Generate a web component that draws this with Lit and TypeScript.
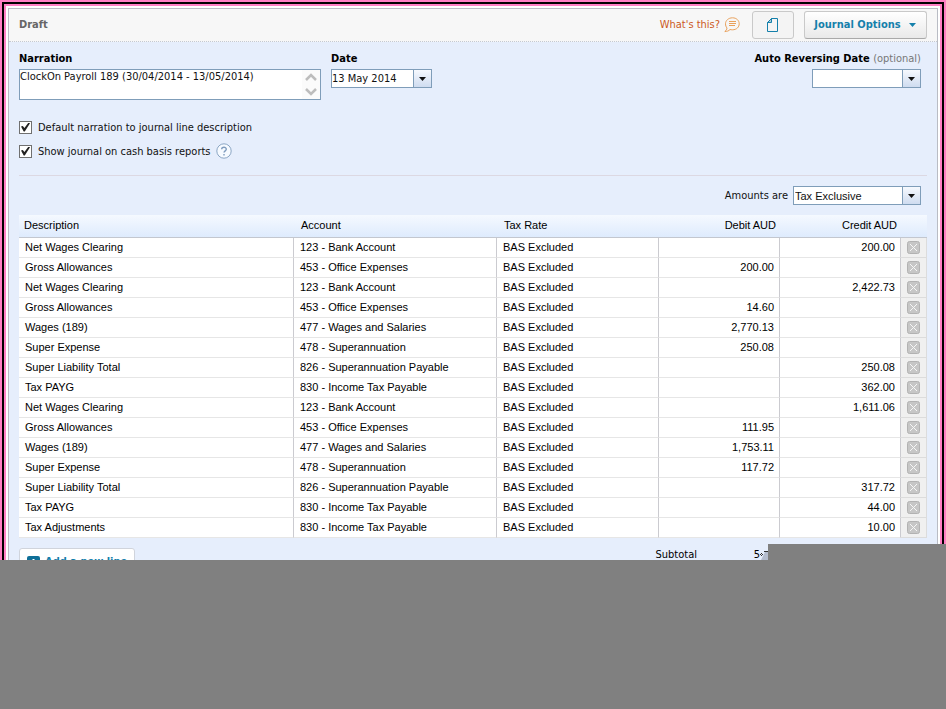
import { LitElement, html, css, svg } from "lit";
import { customElement } from "lit/decorators.js";

interface Line {
  description: string;
  account: string;
  debit?: string;
  credit?: string;
}

const BANK = "123 - Bank Account";
const OFFICE = "453 - Office Expenses";
const WAGES = "477 - Wages and Salaries";
const SUPER = "478 - Superannuation";
const SUPER_PAYABLE = "826 - Superannuation Payable";
const TAX_PAYABLE = "830 - Income Tax Payable";

const LINES: Line[] = [
  { description: "Net Wages Clearing", account: BANK, credit: "200.00" },
  { description: "Gross Allowances", account: OFFICE, debit: "200.00" },
  { description: "Net Wages Clearing", account: BANK, credit: "2,422.73" },
  { description: "Gross Allowances", account: OFFICE, debit: "14.60" },
  { description: "Wages (189)", account: WAGES, debit: "2,770.13" },
  { description: "Super Expense", account: SUPER, debit: "250.08" },
  { description: "Super Liability Total", account: SUPER_PAYABLE, credit: "250.08" },
  { description: "Tax PAYG", account: TAX_PAYABLE, credit: "362.00" },
  { description: "Net Wages Clearing", account: BANK, credit: "1,611.06" },
  { description: "Gross Allowances", account: OFFICE, debit: "111.95" },
  { description: "Wages (189)", account: WAGES, debit: "1,753.11" },
  { description: "Super Expense", account: SUPER, debit: "117.72" },
  { description: "Super Liability Total", account: SUPER_PAYABLE, credit: "317.72" },
  { description: "Tax PAYG", account: TAX_PAYABLE, credit: "44.00" },
  { description: "Tax Adjustments", account: TAX_PAYABLE, credit: "10.00" },
];

const caret = html`<svg class="caret" width="8" height="4" viewBox="0 0 8 4" aria-hidden="true">
  <path d="M0 0h7L3.500 4z" fill="currentColor" />
</svg>`;

const deleteIcon = svg`<svg width="13" height="13" viewBox="0 0 13 13" aria-hidden="true">
  <rect x="0.500" y="0.500" width="12" height="12" rx="2" fill="#c6c6c6" stroke="#b2b2b2" />
  <path d="M3 3l7 7M10 3l-7 7" stroke="#f6f6f6" stroke-width="1" />
</svg>`;

@customElement("app-root")
export class AppRoot extends LitElement {
  static styles = css`
    :host {
      display: flex;
      flex-direction: column;
      min-height: 100vh;
      font: 11px/14px "DejaVu Sans Condensed", "Noto Sans", sans-serif;
      color: #111;
      background: #808080;
    }
    * {
      box-sizing: border-box;
    }
    button,
    input,
    select,
    textarea {
      font: inherit;
      color: inherit;
      margin: 0;
      padding: 0;
      border-radius: 0;
    }
    .frame {
      border: 2px solid #ff7fc4;
      border-bottom: 0;
    }
    .frame-line {
      border: 2px solid #000;
      border-bottom: 0;
    }
    .frame-inner {
      border: 2px solid #ff7fc4;
      border-bottom: 0;
      background: #fff;
      padding: 2px 2px 0;
    }
    .panel {
      border: 1px solid #b9bcc4;
      border-bottom: 0;
      background: #e6eefc;
    }
    .bar {
      display: flex;
      align-items: center;
      height: 33px;
      padding: 0 10px;
      background: #f7f7f7;
      border-bottom: 1px dotted #c4c9d2;
    }
    .title {
      flex: 1;
      margin: 0;
      font-size: 11px;
      font-weight: bold;
      color: #666;
    }
    .help-link {
      display: flex;
      align-items: center;
      gap: 4px;
      margin-right: 12px;
      color: #cc5a1e;
      text-decoration: none;
    }
    .tool {
      display: flex;
      align-items: center;
      justify-content: center;
      height: 28px;
      border: 1px solid #c9c9c9;
      border-radius: 3px;
      background: linear-gradient(#fff, #e9e9e9);
      color: #1580ab;
      font-weight: bold;
    }
    .tool-page {
      width: 42px;
      margin-right: 10px;
      background: #f4f4f4;
    }
    .tool-options {
      width: 123px;
      gap: 8px;
      border-bottom-color: #a9a9a9;
    }
    .content {
      padding: 10px 10px 0;
    }
    .fields {
      display: flex;
      gap: 10px;
      height: 63px;
    }
    .field {
      display: flex;
      flex-direction: column;
      align-items: flex-start;
      gap: 3px;
    }
    .field-right {
      margin-left: auto;
      margin-right: 6px;
      align-items: flex-end;
    }
    .label {
      font-weight: bold;
      color: #000;
    }
    .optional {
      font-weight: normal;
      color: #777;
    }
    .narration {
      display: flex;
      width: 302px;
      height: 31px;
      border: 1px solid #7f9db9;
      background: #fff;
    }
    .narration-text {
      flex: 1;
      border: 0;
      outline: 0;
      resize: none;
      overflow: hidden;
      background: none;
    }
    .scroll {
      display: flex;
      flex-direction: column;
      align-items: center;
      justify-content: space-around;
      width: 18px;
      background: #fbfbfb;
    }
    .combo {
      display: flex;
      height: 19px;
      border: 1px solid #7f9db9;
      background: #fff;
    }
    .combo-date {
      width: 101px;
    }
    .combo-reverse {
      width: 109px;
    }
    .combo-amounts {
      width: 128px;
      position: relative;
    }
    .combo-input {
      flex: 1;
      min-width: 0;
      border: 0;
      outline: 0;
      background: none;
      appearance: none;
    }
    .combo-button {
      display: flex;
      align-items: center;
      justify-content: center;
      width: 18px;
      border: 0;
      border-left: 1px solid #7f9db9;
      background: linear-gradient(#f6f9fe, #cfdcf0);
      color: #111;
    }
    .arial {
      padding: 0 1px;
      font-family: "Liberation Sans", Arial, sans-serif;
    }
    .checks {
      display: flex;
      flex-direction: column;
      padding-bottom: 12px;
      border-bottom: 1px solid #dcd8e2;
    }
    .check {
      display: flex;
      align-items: center;
      gap: 6px;
      height: 24px;
    }
    .check label {
      margin-top: 2px;
    }
    .tick {
      appearance: none;
      width: 13px;
      height: 13px;
      border: 1px solid #707070;
      background: #fff;
      display: grid;
      place-items: center;
    }
    .tick:checked::before {
      content: "";
      width: 9px;
      height: 9px;
      background: #222;
      clip-path: polygon(0 45%, 20% 38%, 38% 62%, 84% 0, 100% 8%, 42% 100%, 30% 100%);
    }
    .question {
      display: flex;
      border: 0;
      background: none;
    }
    .amounts {
      display: flex;
      justify-content: flex-end;
      align-items: center;
      gap: 5px;
      padding: 10px 6px 10px 0;
    }
    .lines {
      width: 100%;
      table-layout: fixed;
      border-collapse: separate;
      border-spacing: 0;
      font: 11px/14px "Liberation Sans", Arial, sans-serif;
      color: #000;
    }
    .lines th {
      height: 23px;
      padding: 0 4px 2px 7px;
      font-weight: normal;
      text-align: left;
      background: linear-gradient(#f5f9ff, #deebfd);
      border-bottom: 1px solid #c3c7cf;
    }
    .lines th:first-child {
      padding-left: 5px;
    }
    .lines td {
      height: 20px;
      padding: 0 5px 1px 6px;
      background: #fff;
      border-right: 1px solid #cbcbd0;
      border-bottom: 1px solid #e6e6e6;
      white-space: nowrap;
    }
    .lines .num {
      text-align: right;
    }
    .lines .remove-cell {
      padding: 0;
      background: #f0f0f0;
      border-color: #dcdcdc;
    }
    .col-account {
      width: 203px;
    }
    .col-rate {
      width: 162px;
    }
    .col-amount {
      width: 121px;
    }
    .col-remove {
      width: 26px;
    }
    .remove {
      display: flex;
      margin: 0 auto;
      border: 0;
      background: none;
    }
    .summary {
      display: flex;
      align-items: flex-start;
      height: 22px;
      overflow: hidden;
      padding-top: 10px;
    }
    .add {
      display: flex;
      align-items: center;
      gap: 5px;
      width: 116px;
      height: 28px;
      padding-left: 7px;
      border: 1px solid #d0d4dc;
      border-radius: 3px;
      background: #fff;
      color: #1580ab;
      font-weight: bold;
      white-space: nowrap;
    }
    .subtotal {
      flex: 1;
      display: flex;
      justify-content: flex-end;
      padding: 2px 159px 0 0;
      line-height: 10px;
      color: #000;
    }
    .subtotal-value {
      display: flex;
      justify-content: flex-end;
      width: 71px;
    }
    .cover {
      flex: 1;
      position: relative;
      background: #808080;
    }
    .cover-step {
      position: absolute;
      right: 0;
      bottom: 100%;
      width: 178px;
      height: 16px;
      background: #808080;
    }
  `;

  render() {
    return html`
      <div class="frame"><div class="frame-line"><div class="frame-inner">
        <main class="panel">
          <header class="bar">
            <h1 class="title">Draft</h1>
            <a class="help-link" href="#help">What's this?
              <svg width="16" height="16" viewBox="0 0 16 16" fill="none" stroke="#e9a15c" aria-hidden="true">
                <path d="M8.500 0.800C12.500 0.800 15.200 3.500 15.200 6.800S12.500 12.800 8.500 12.800C7.500 12.800 6.800 12.700 6 12.500C4.700 14 3 14.500 0.800 14.500C2.200 13.500 2.800 12.500 3 11C2 9.800 1.500 8.500 1.500 6.800C1.500 3.500 4.500 0.800 8.500 0.800z" />
                <path d="M5 4.500h7M5 6.500h7M5 8.500h6" />
              </svg>
            </a>
            <button class="tool tool-page" aria-label="Files">
              <svg width="12" height="14" viewBox="0 0 12 14" fill="none" stroke="currentColor" aria-hidden="true">
                <path d="M4.500 0.500h6v13h-10v-9z" />
                <path d="M4.500 0.500v4h-4z" fill="currentColor" fill-opacity="0.350" />
              </svg>
            </button>
            <button class="tool tool-options">Journal Options ${caret}</button>
          </header>

          <section class="content">
            <div class="fields">
              <div class="field">
                <label class="label" for="narration">Narration</label>
                <div class="narration">
                  <textarea id="narration" class="narration-text" .value=${"ClockOn Payroll 189 (30/04/2014 - 13/05/2014)"}></textarea>
                  <div class="scroll">
                    <svg width="12" height="8" viewBox="0 0 12 8" fill="none" stroke="#bdbdbd" stroke-width="2.500"><path d="M1 7l5-5 5 5" /></svg>
                    <svg width="12" height="8" viewBox="0 0 12 8" fill="none" stroke="#bdbdbd" stroke-width="2.500"><path d="M1 1l5 5 5-5" /></svg>
                  </div>
                </div>
              </div>
              <div class="field">
                <label class="label" for="date">Date</label>
                <div class="combo combo-date">
                  <input id="date" class="combo-input" value="13 May 2014" />
                  <button class="combo-button" aria-label="Choose date">${caret}</button>
                </div>
              </div>
              <div class="field field-right">
                <label class="label" for="reverse">Auto Reversing Date <span class="optional">(optional)</span></label>
                <div class="combo combo-reverse">
                  <input id="reverse" class="combo-input" />
                  <button class="combo-button" aria-label="Choose reversing date">${caret}</button>
                </div>
              </div>
            </div>

            <div class="checks">
              <div class="check">
                <input id="default" class="tick" type="checkbox" checked />
                <label for="default">Default narration to journal line description</label>
              </div>
              <div class="check">
                <input id="cash" class="tick" type="checkbox" checked />
                <label for="cash">Show journal on cash basis reports</label>
                <button class="question" aria-label="Help">
                  <svg width="16" height="16" viewBox="0 0 16 16" fill="none" aria-hidden="true">
                    <circle cx="8" cy="8" r="7.200" fill="#f6faff" stroke="#8ba6c4" />
                    <path d="M5.700 6.300C5.700 3.500 10.300 3.500 10.300 6.200C10.300 7.800 8 7.900 8 9.600M8 11v1.500" stroke="#7f9cbe" stroke-width="1.400" />
                  </svg>
                </button>
              </div>
            </div>

            <div class="amounts">
              <label for="amounts">Amounts are</label>
              <div class="combo combo-amounts">
                <select id="amounts" class="combo-input arial">
                  <option>Tax Exclusive</option>
                  <option>Tax Inclusive</option>
                  <option>No Tax</option>
                </select>
                <span class="combo-button">${caret}</span>
              </div>
            </div>

            <table class="lines">
              <colgroup>
                <col />
                <col class="col-account" />
                <col class="col-rate" />
                <col class="col-amount" />
                <col class="col-amount" />
                <col class="col-remove" />
              </colgroup>
              <thead>
                <tr>
                  <th>Description</th>
                  <th>Account</th>
                  <th>Tax Rate</th>
                  <th class="num">Debit AUD</th>
                  <th class="num">Credit AUD</th>
                  <th></th>
                </tr>
              </thead>
              <tbody>
                ${LINES.map(
                  (line) => html`<tr>
                    <td>${line.description}</td>
                    <td>${line.account}</td>
                    <td>BAS Excluded</td>
                    <td class="num">${line.debit}</td>
                    <td class="num">${line.credit}</td>
                    <td class="remove-cell"><button class="remove" aria-label="Remove line">${deleteIcon}</button></td>
                  </tr>`
                )}
              </tbody>
            </table>

            <footer class="summary">
              <button class="add">
                <svg width="13" height="13" viewBox="0 0 13 13" aria-hidden="true">
                  <rect width="13" height="13" rx="2" fill="#0f6f98" />
                  <path d="M6.500 3v7M3 6.500h7" stroke="#fff" stroke-width="2" />
                </svg>
                Add a new line
              </button>
              <div class="subtotal">
                <span>Subtotal</span>
                <span class="subtotal-value">5<svg width="8" height="10" viewBox="0 0 8 10" aria-hidden="true">
                  <path d="M1 10L5 2h3v8z" fill="#b4bccd" />
                  <path d="M0 4h1v1h-1zM1 3h1v1h-1zM2 4h1v1h-1zM1 5h1v1h-1zM4 1h4v1h-4z" fill="#333" />
                </svg></span>
              </div>
            </footer>
          </section>
        </main>
      </div></div></div>
      <div class="cover"><div class="cover-step"></div></div>
    `;
  }
}
